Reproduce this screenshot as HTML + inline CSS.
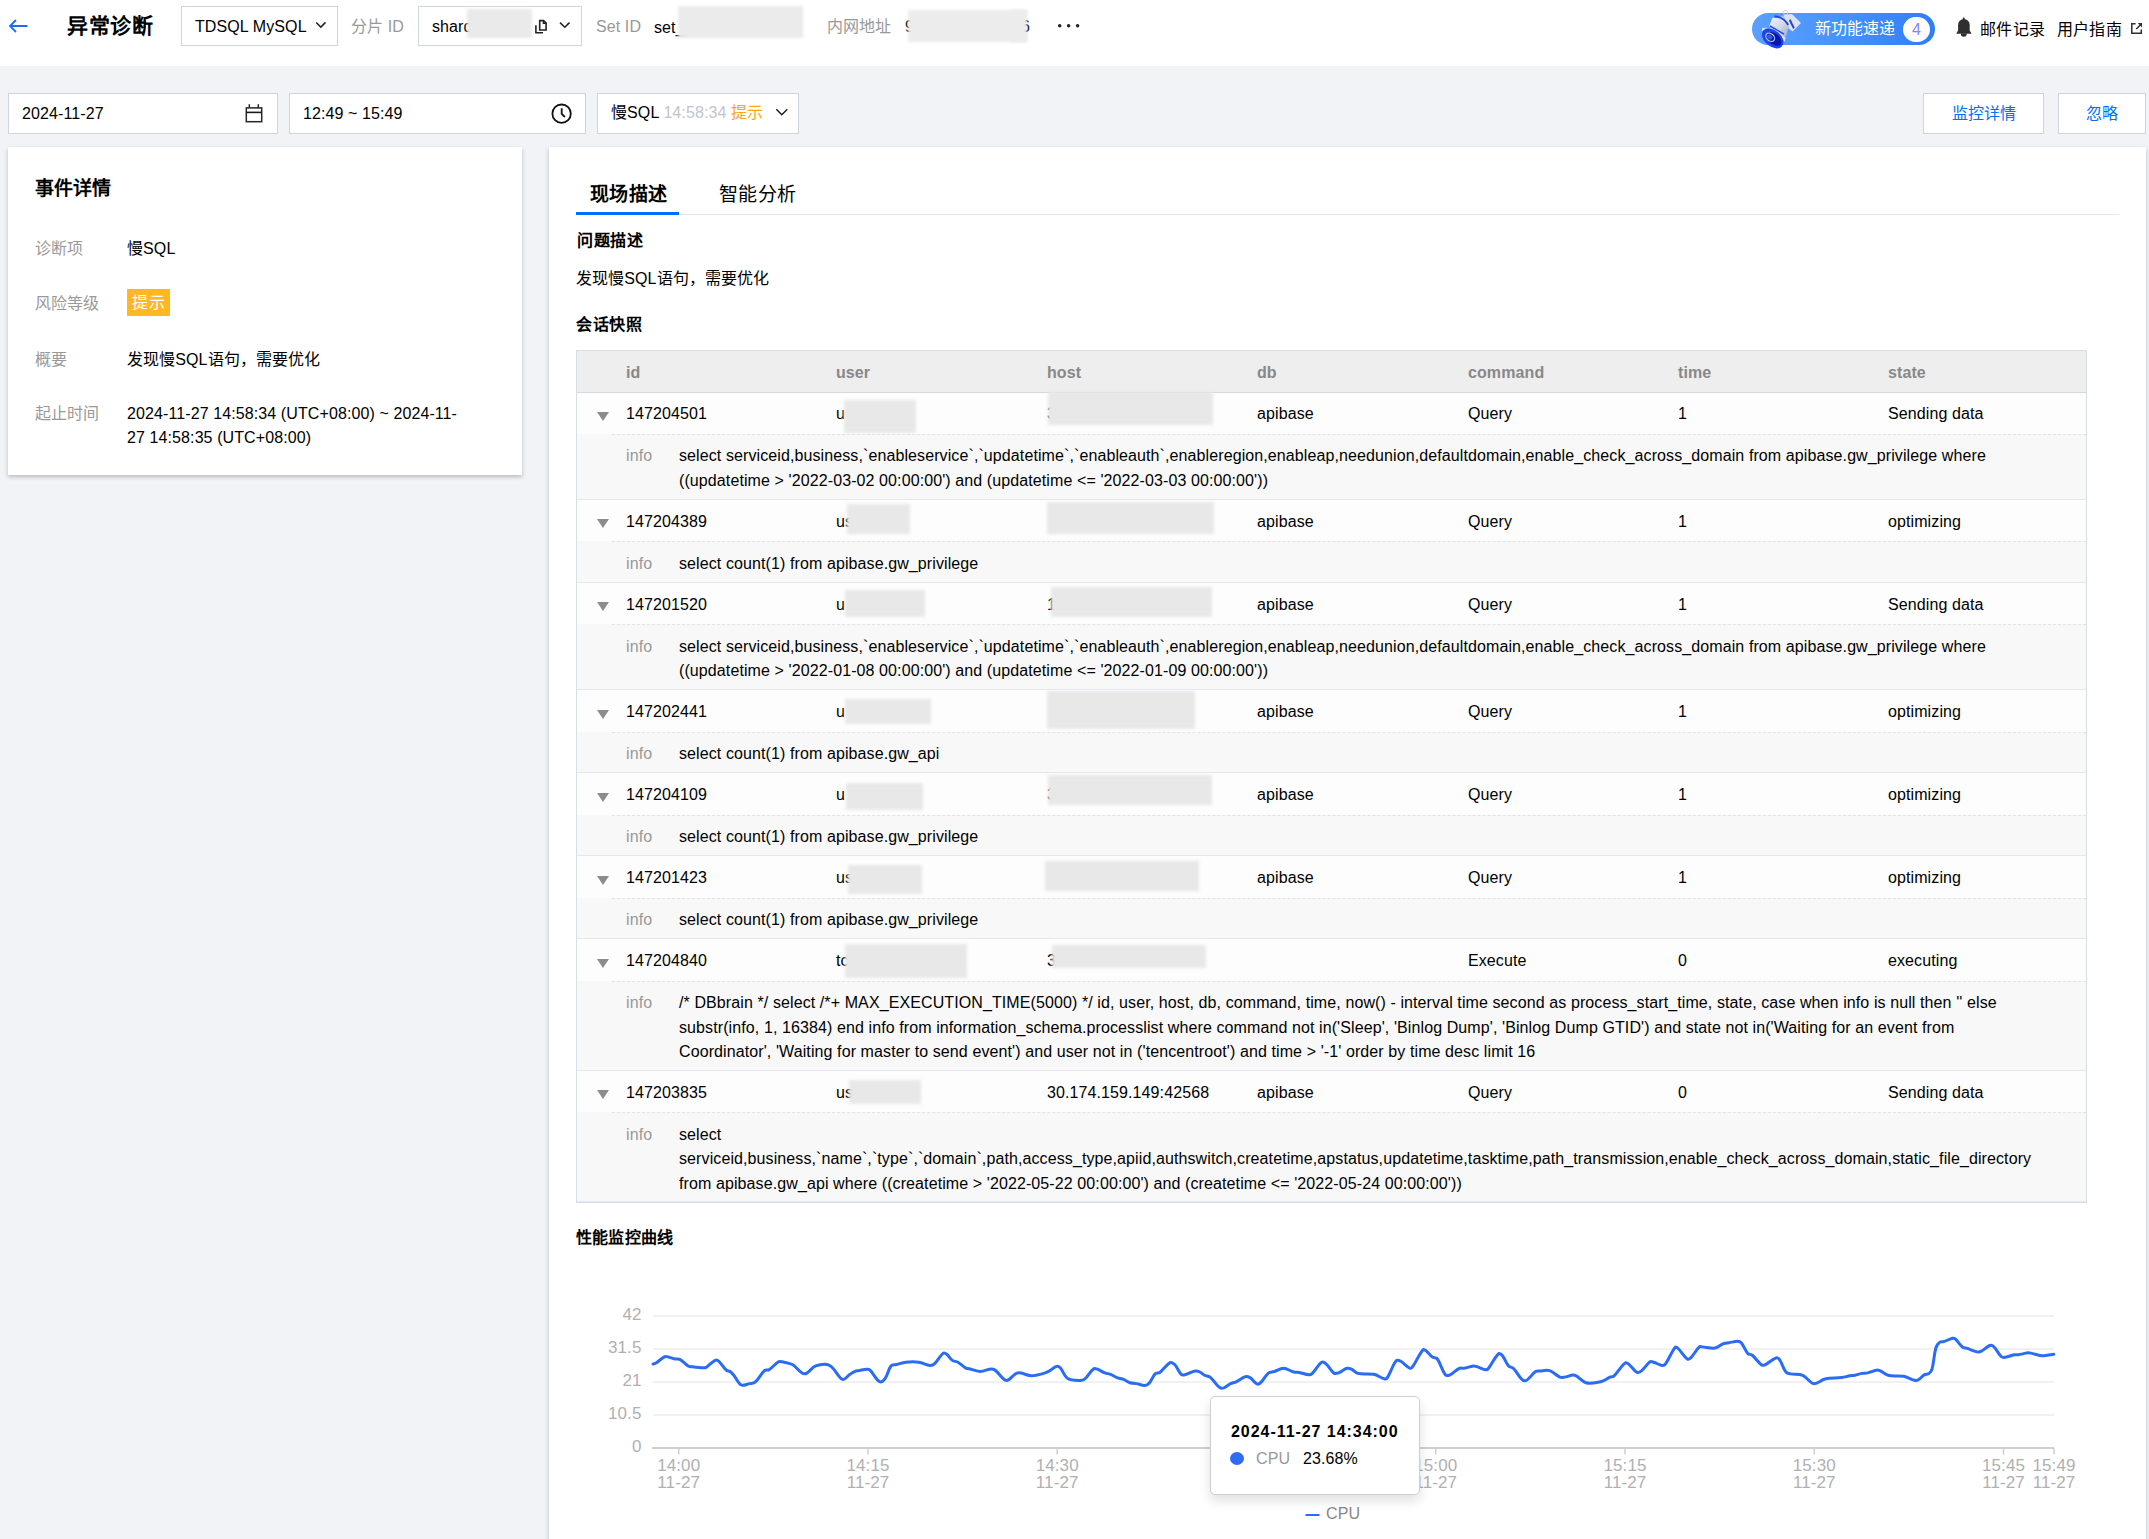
<!DOCTYPE html><html lang="zh-CN"><head><meta charset="utf-8"><style>
*{box-sizing:border-box;margin:0;padding:0}
html,body{width:2149px;height:1539px;overflow:hidden}
body{background:#f2f3f6;font-family:"Liberation Sans",sans-serif;color:#000;font-size:16px;position:relative;letter-spacing:.1px}
.abs{position:absolute}
.hdr{position:absolute;left:0;top:0;width:2149px;height:66px;background:#fff}
.box{position:absolute;border:1px solid #cfd5de;background:#fff}
.blur{position:absolute;background:#e8e8e8;filter:blur(1.5px)}
.gray{color:#999}
.t{position:absolute;white-space:nowrap;line-height:1}
.panel{position:absolute;background:#fff;box-shadow:0 2px 4px rgba(54,58,80,.3)}
.tbl{position:absolute;left:576px;top:350px;width:1511px;height:853px;border:1px solid #d9dee6;background:#fff}
.th{position:absolute;left:577px;top:351px;width:1509px;height:42px;background:#eeeeee;border-bottom:1px solid #d3d9e1}
.th span{position:absolute;top:14px;line-height:1;font-weight:bold;color:#888;font-size:16px}
.tr{position:absolute;left:577px;width:1509px;background:#fdfdfd}
.tr .c{position:absolute;top:14px;line-height:1;white-space:nowrap}
.tri{position:absolute;left:19.5px;top:19.5px;width:0;height:0;border-left:6px solid transparent;border-right:6px solid transparent;border-top:9px solid #8c8c8c}
.ir{position:absolute;left:577px;width:1509px;background:#f8f8f8;border-bottom:1px solid #e4e8ee}
.ir:before{content:"";position:absolute;left:35px;right:0;top:0;border-top:1px dashed #e3e3e3}
.il{position:absolute;left:49px;top:10.5px;line-height:24.5px;color:#999}
.sql{position:absolute;left:102px;top:10.5px;width:1365px;line-height:24.5px}
</style></head><body>
<div class="hdr">
<svg class="abs" style="left:8px;top:18px" width="22" height="16" viewBox="0 0 22 16"><path d="M2 8H19.5M8 2L2 8L8 14" fill="none" stroke="#1b6ef3" stroke-width="1.8"/></svg>
<div class="t" style="left:67px;top:15px;font-size:21px;font-weight:bold;letter-spacing:.6px">异常诊断</div>
<div class="box" style="left:181px;top:6px;width:157px;height:40px"></div>
<div class="t" style="left:195px;top:18.5px">TDSQL MySQL</div>
<svg class="abs" style="left:310px;top:16px" width="20" height="16" viewBox="310 16 20 16"><path d="M316.2 22.4L320.8 27.1L325.5 22.4" fill="none" stroke="#222" stroke-width="1.5"/></svg>
<div class="t gray" style="left:351px;top:19px">分片 ID</div>
<div class="box" style="left:418px;top:6px;width:164px;height:40px"></div>
<div class="t" style="left:432px;top:19px">shard</div>
<div class="blur" style="left:467px;top:9px;width:65px;height:29px;background:#eaeaea"></div>
<svg class="abs" style="left:530px;top:14px" width="45" height="24" viewBox="530 14 45 24"><path d="M539.7 30V20.6H543.6L546.1 23.1V30Z" fill="none" stroke="#222" stroke-width="1.6"/><path d="M543.4 20.2V23.3H546.4" fill="none" stroke="#222" stroke-width="1.4"/><path d="M535.9 25.2V32.8H543" fill="none" stroke="#222" stroke-width="1.6"/><path d="M560 22.6L564.8 27.3L569.5 22.6" fill="none" stroke="#222" stroke-width="1.5"/></svg>
<div class="t gray" style="left:596px;top:19px">Set ID</div>
<div class="t" style="left:654px;top:19.5px">set_</div>
<div class="blur" style="left:678px;top:6px;width:125px;height:32px;background:#ebebeb"></div>
<div class="t gray" style="left:827px;top:18.5px">内网地址</div>
<div class="t" style="left:905px;top:19px">9</div>
<div class="blur" style="left:908px;top:10px;width:119px;height:32px;background:#ececec"></div>
<div class="t" style="left:1021px;top:19px">6</div>
<div class="blur" style="left:1010px;top:10px;width:17px;height:32px;background:#ececec"></div>
<svg class="abs" style="left:1050px;top:20px" width="35" height="12" viewBox="1050 20 35 12"><circle cx="1059.7" cy="25.8" r="1.75" fill="#222"/><circle cx="1068.6" cy="25.8" r="1.75" fill="#222"/><circle cx="1077.6" cy="25.8" r="1.75" fill="#222"/></svg>
<div class="abs" style="left:1752px;top:13px;width:183px;height:32px;border-radius:16px;background:linear-gradient(90deg,#5aa0fe 0%,#4a95fd 40%,#2f7ef7 100%)"></div>
<svg class="abs" style="left:1745px;top:5px" width="70" height="47" viewBox="0 0 2149 1443">
<defs><linearGradient id="mg" x1="0" y1="0" x2="1" y2="1"><stop offset="0" stop-color="#eef1f6"/><stop offset=".55" stop-color="#d3d8e6"/><stop offset="1" stop-color="#98a2c8"/></linearGradient></defs>
<path d="M1175 300L1440 280L1720 555L1460 815L1340 720Z" fill="#dce1ef"/>
<path d="M1345 465L1400 440L1525 700L1480 735Z" fill="#1f42e2"/>
<ellipse cx="1245" cy="232" rx="72" ry="62" fill="none" stroke="#c6cee8" stroke-width="30"/>
<path d="M840 400L1170 345L1345 650L1250 1010L740 660Z" fill="url(#mg)"/>
<path d="M905 355Q1160 345 1330 610" fill="none" stroke="#1d44e6" stroke-width="58"/>
<path d="M765 640L1195 895" fill="none" stroke="#1e45e8" stroke-width="46"/>
<path d="M530 705Q900 640 1245 1010L1225 1125Q900 770 515 790Z" fill="#dde2ee"/>
<ellipse cx="850" cy="1025" rx="375" ry="250" transform="rotate(40 850 1025)" fill="#1c46e8"/>
<ellipse cx="890" cy="1040" rx="265" ry="165" transform="rotate(40 890 1040)" fill="#0716b0"/>
<ellipse cx="775" cy="990" rx="150" ry="110" transform="rotate(40 775 990)" fill="none" stroke="#c3cbe6" stroke-width="36"/>
<ellipse cx="760" cy="980" rx="92" ry="70" transform="rotate(40 760 980)" fill="#2b5df0"/>
</svg>
<div class="t" style="left:1815px;top:20.5px;color:#fff">新功能速递</div>
<div class="abs" style="left:1902.5px;top:16.5px;width:27.5px;height:25.5px;border-radius:13px;background:#fff"></div>
<div class="t" style="left:1912px;top:21.5px;color:#8585f5">4</div>
<svg class="abs" style="left:1950px;top:12px" width="30" height="30" viewBox="0 0 30 30"><path d="M6.2 21.7L8.1 18.6V12.8A5.7 5.7 0 0 1 19.7 12.8V18.6L21.6 21.7Z" fill="#2f2f2f"/><rect x="12.8" y="5.6" width="1.9" height="3" rx=".9" fill="#2f2f2f"/><path d="M10.8 21.5A3 3.2 0 0 0 16.8 21.5Z" fill="#2f2f2f"/></svg>
<div class="t" style="left:1980px;top:22px;letter-spacing:.4px">邮件记录</div>
<div class="t" style="left:2056.5px;top:22px;letter-spacing:.4px">用户指南</div>
<svg class="abs" style="left:2125px;top:18px" width="24" height="22" viewBox="2125 18 24 22"><path d="M2135.6 23.8H2131.8V33.3H2141.3V29.4" fill="none" stroke="#2f2f2f" stroke-width="1.5"/><path d="M2136.3 29L2140.6 24.7" fill="none" stroke="#2f2f2f" stroke-width="1.6"/><path d="M2137.8 23.1H2142V27.4Z" fill="#2f2f2f"/></svg>
</div>
<div class="box" style="left:8px;top:93px;width:270px;height:41px"></div>
<div class="t" style="left:22px;top:105.5px">2024-11-27</div>
<svg class="abs" style="left:240px;top:100px" width="30" height="28" viewBox="240 100 30 28"><rect x="246.3" y="107.9" width="15.4" height="13.8" fill="none" stroke="#262626" stroke-width="1.5"/><path d="M246.3 112.4H261.7" stroke="#1a1a1a" stroke-width="1.6"/><path d="M249.3 104.3V108M258.3 104.3V108" stroke="#262626" stroke-width="1.5"/></svg>
<div class="box" style="left:289px;top:93px;width:297px;height:41px"></div>
<div class="t" style="left:303px;top:105.5px">12:49 ~ 15:49</div>
<svg class="abs" style="left:548px;top:100px" width="28" height="28" viewBox="548 100 28 28"><circle cx="561.6" cy="113.7" r="9.2" fill="none" stroke="#111" stroke-width="1.8"/><path d="M561.7 108.2V113.9L564.9 117" fill="none" stroke="#111" stroke-width="1.8"/></svg>
<div class="box" style="left:597px;top:93px;width:202px;height:41px"></div>
<div class="t" style="left:611px;top:105px">慢SQL <span style="color:#bfc5cf">14:58:34</span> <span style="color:#ffa60f">提示</span></div>
<svg class="abs" style="left:770px;top:104px" width="22" height="16" viewBox="770 104 22 16"><path d="M776.3 109.3L781.8 114.8L787.3 109.3" fill="none" stroke="#222" stroke-width="1.5"/></svg>
<div class="box" style="left:1923px;top:93px;width:121px;height:41px"></div>
<div class="t" style="left:1952px;top:106px;color:#006eff">监控详情</div>
<div class="box" style="left:2058px;top:93px;width:88px;height:41px"></div>
<div class="t" style="left:2086px;top:106px;color:#006eff">忽略</div>
<div class="panel" style="left:8px;top:147px;width:514px;height:328px"></div>
<div class="t" style="left:35px;top:178.5px;font-size:19px;font-weight:bold">事件详情</div>
<div class="t gray" style="left:35px;top:241px">诊断项</div>
<div class="t" style="left:127px;top:240.5px">慢SQL</div>
<div class="t gray" style="left:35px;top:295.5px">风险等级</div>
<div class="abs" style="left:127px;top:289px;width:43px;height:27px;background:#ffb821"></div>
<div class="t" style="left:132px;top:295px;color:#fff;letter-spacing:.6px">提示</div>
<div class="t gray" style="left:35px;top:351.5px">概要</div>
<div class="t" style="left:127px;top:351.5px">发现慢SQL语句，需要优化</div>
<div class="t gray" style="left:35px;top:406px">起止时间</div>
<div class="abs" style="left:127px;top:401.5px;width:340px;line-height:24px">2024-11-27 14:58:34 (UTC+08:00) ~ 2024-11-27 14:58:35 (UTC+08:00)</div>
<div class="panel" style="left:549px;top:147px;width:1597px;height:1400px"></div>
<div class="t" style="left:590px;top:184.5px;font-size:19px;font-weight:bold;letter-spacing:.3px">现场描述</div>
<div class="abs" style="left:576px;top:213.5px;width:1543px;height:1.5px;background:#e3e6ec"></div>
<div class="abs" style="left:576px;top:212px;width:103px;height:3px;background:#006eff"></div>
<div class="t" style="left:719px;top:184.5px;font-size:19px;letter-spacing:.3px">智能分析</div>
<div class="t" style="left:577px;top:232.5px;font-weight:bold;letter-spacing:.5px">问题描述</div>
<div class="t" style="left:576px;top:271px">发现慢SQL语句，需要优化</div>
<div class="t" style="left:576px;top:317px;font-weight:bold;letter-spacing:.5px">会话快照</div>
<div class="tbl"></div>
<div class="th"><span style="left:49px">id</span><span style="left:259px">user</span><span style="left:470px">host</span><span style="left:680px">db</span><span style="left:891px">command</span><span style="left:1101px">time</span><span style="left:1311px">state</span></div>
<div class="tr" style="top:392.0px;height:41.5px"><i class="tri"></i><span class="c" style="left:49px">147204501</span><span class="c" style="left:259px">u</span><span class="c" style="left:470px">3</span><span class="c" style="left:680px">apibase</span><span class="c" style="left:891px">Query</span><span class="c" style="left:1101px">1</span><span class="c" style="left:1311px">Sending data</span></div>
<div class="ir" style="top:433.5px;height:66px"><span class="il">info</span><div class="sql">select serviceid,business,`enableservice`,`updatetime`,`enableauth`,enableregion,enableap,needunion,defaultdomain,enable_check_across_domain from apibase.gw_privilege where ((updatetime &gt; '2022-03-02 00:00:00') and (updatetime &lt;= '2022-03-03 00:00:00'))</div></div>
<div class="tr" style="top:499.5px;height:41.5px"><i class="tri"></i><span class="c" style="left:49px">147204389</span><span class="c" style="left:259px">us</span><span class="c" style="left:470px"></span><span class="c" style="left:680px">apibase</span><span class="c" style="left:891px">Query</span><span class="c" style="left:1101px">1</span><span class="c" style="left:1311px">optimizing</span></div>
<div class="ir" style="top:541.0px;height:41.5px"><span class="il">info</span><div class="sql">select count(1) from apibase.gw_privilege</div></div>
<div class="tr" style="top:582.5px;height:41.5px"><i class="tri"></i><span class="c" style="left:49px">147201520</span><span class="c" style="left:259px">u</span><span class="c" style="left:470px">1</span><span class="c" style="left:680px">apibase</span><span class="c" style="left:891px">Query</span><span class="c" style="left:1101px">1</span><span class="c" style="left:1311px">Sending data</span></div>
<div class="ir" style="top:624.0px;height:66px"><span class="il">info</span><div class="sql">select serviceid,business,`enableservice`,`updatetime`,`enableauth`,enableregion,enableap,needunion,defaultdomain,enable_check_across_domain from apibase.gw_privilege where ((updatetime &gt; '2022-01-08 00:00:00') and (updatetime &lt;= '2022-01-09 00:00:00'))</div></div>
<div class="tr" style="top:690.0px;height:41.5px"><i class="tri"></i><span class="c" style="left:49px">147202441</span><span class="c" style="left:259px">u</span><span class="c" style="left:470px"></span><span class="c" style="left:680px">apibase</span><span class="c" style="left:891px">Query</span><span class="c" style="left:1101px">1</span><span class="c" style="left:1311px">optimizing</span></div>
<div class="ir" style="top:731.5px;height:41.5px"><span class="il">info</span><div class="sql">select count(1) from apibase.gw_api</div></div>
<div class="tr" style="top:773.0px;height:41.5px"><i class="tri"></i><span class="c" style="left:49px">147204109</span><span class="c" style="left:259px">u</span><span class="c" style="left:470px">3</span><span class="c" style="left:680px">apibase</span><span class="c" style="left:891px">Query</span><span class="c" style="left:1101px">1</span><span class="c" style="left:1311px">optimizing</span></div>
<div class="ir" style="top:814.5px;height:41.5px"><span class="il">info</span><div class="sql">select count(1) from apibase.gw_privilege</div></div>
<div class="tr" style="top:856.0px;height:41.5px"><i class="tri"></i><span class="c" style="left:49px">147201423</span><span class="c" style="left:259px">us</span><span class="c" style="left:470px"></span><span class="c" style="left:680px">apibase</span><span class="c" style="left:891px">Query</span><span class="c" style="left:1101px">1</span><span class="c" style="left:1311px">optimizing</span></div>
<div class="ir" style="top:897.5px;height:41.5px"><span class="il">info</span><div class="sql">select count(1) from apibase.gw_privilege</div></div>
<div class="tr" style="top:939.0px;height:41.5px"><i class="tri"></i><span class="c" style="left:49px">147204840</span><span class="c" style="left:259px">tc</span><span class="c" style="left:470px">3</span><span class="c" style="left:680px"></span><span class="c" style="left:891px">Execute</span><span class="c" style="left:1101px">0</span><span class="c" style="left:1311px">executing</span></div>
<div class="ir" style="top:980.5px;height:90px"><span class="il">info</span><div class="sql">/* DBbrain */ select /*+ MAX_EXECUTION_TIME(5000) */ id, user, host, db, command, time, now() - interval time second as process_start_time, state, case when info is null then '' else substr(info, 1, 16384) end info from information_schema.processlist where command not in('Sleep', 'Binlog Dump', 'Binlog Dump GTID') and state not in('Waiting for an event from Coordinator', 'Waiting for master to send event') and user not in ('tencentroot') and time &gt; '-1' order by time desc limit 16</div></div>
<div class="tr" style="top:1070.5px;height:41.5px"><i class="tri"></i><span class="c" style="left:49px">147203835</span><span class="c" style="left:259px">us</span><span class="c" style="left:470px">30.174.159.149:42568</span><span class="c" style="left:680px">apibase</span><span class="c" style="left:891px">Query</span><span class="c" style="left:1101px">0</span><span class="c" style="left:1311px">Sending data</span></div>
<div class="ir" style="top:1112.0px;height:90px"><span class="il">info</span><div class="sql">select serviceid,business,`name`,`type`,`domain`,path,access_type,apiid,authswitch,createtime,apstatus,updatetime,tasktime,path_transmission,enable_check_across_domain,static_file_directory from apibase.gw_api where ((createtime &gt; '2022-05-22 00:00:00') and (createtime &lt;= '2022-05-24 00:00:00'))</div></div>
<div class="abs" style="left:577px;top:392px;width:1509px;height:1px;background:#d3d9e1"></div>
<div class="blur" style="left:844px;top:400px;width:72px;height:33px"></div>
<div class="blur" style="left:1048px;top:392px;width:165px;height:33px"></div>
<div class="blur" style="left:847px;top:504px;width:63px;height:30px"></div>
<div class="blur" style="left:1047px;top:502px;width:167px;height:32px"></div>
<div class="blur" style="left:845px;top:590px;width:80px;height:27px"></div>
<div class="blur" style="left:1051px;top:587px;width:161px;height:30px"></div>
<div class="blur" style="left:845px;top:699px;width:86px;height:25px"></div>
<div class="blur" style="left:1047px;top:691px;width:148px;height:38px"></div>
<div class="blur" style="left:846px;top:783px;width:77px;height:27px"></div>
<div class="blur" style="left:1048px;top:775px;width:164px;height:30px"></div>
<div class="blur" style="left:848px;top:865px;width:74px;height:29px"></div>
<div class="blur" style="left:1045px;top:861px;width:154px;height:30px"></div>
<div class="blur" style="left:845px;top:944px;width:122px;height:34px"></div>
<div class="blur" style="left:1052px;top:945px;width:154px;height:23px"></div>
<div class="blur" style="left:849px;top:1080px;width:72px;height:24px"></div>
<div class="t" style="left:576px;top:1230px;font-weight:bold;letter-spacing:.2px">性能监控曲线</div>
<svg class="abs" style="left:549px;top:1260px" width="1597" height="279" viewBox="549 1260 1597 279">
<line x1="653" y1="1316" x2="2054" y2="1316" stroke="#ececec" stroke-width="1.5"/>
<line x1="653" y1="1349" x2="2054" y2="1349" stroke="#ececec" stroke-width="1.5"/>
<line x1="653" y1="1382" x2="2054" y2="1382" stroke="#ececec" stroke-width="1.5"/>
<line x1="653" y1="1415" x2="2054" y2="1415" stroke="#ececec" stroke-width="1.5"/>
<line x1="652" y1="1448" x2="2054" y2="1448" stroke="#cfcfcf" stroke-width="2"/>
<line x1="678.7" y1="1448" x2="678.7" y2="1454.5" stroke="#cfcfcf" stroke-width="1.5"/>
<line x1="868.0" y1="1448" x2="868.0" y2="1454.5" stroke="#cfcfcf" stroke-width="1.5"/>
<line x1="1057.2" y1="1448" x2="1057.2" y2="1454.5" stroke="#cfcfcf" stroke-width="1.5"/>
<line x1="1246.5" y1="1448" x2="1246.5" y2="1454.5" stroke="#cfcfcf" stroke-width="1.5"/>
<line x1="1435.8" y1="1448" x2="1435.8" y2="1454.5" stroke="#cfcfcf" stroke-width="1.5"/>
<line x1="1625.0" y1="1448" x2="1625.0" y2="1454.5" stroke="#cfcfcf" stroke-width="1.5"/>
<line x1="1814.3" y1="1448" x2="1814.3" y2="1454.5" stroke="#cfcfcf" stroke-width="1.5"/>
<line x1="2003.5" y1="1448" x2="2003.5" y2="1454.5" stroke="#cfcfcf" stroke-width="1.5"/>
<line x1="2054.0" y1="1448" x2="2054.0" y2="1454.5" stroke="#cfcfcf" stroke-width="1.5"/>
<text x="641.5" y="1320" text-anchor="end" font-size="17" fill="#b0b0b0">42</text>
<text x="641.5" y="1353" text-anchor="end" font-size="17" fill="#b0b0b0">31.5</text>
<text x="641.5" y="1386" text-anchor="end" font-size="17" fill="#b0b0b0">21</text>
<text x="641.5" y="1419" text-anchor="end" font-size="17" fill="#b0b0b0">10.5</text>
<text x="641.5" y="1452" text-anchor="end" font-size="17" fill="#b0b0b0">0</text>
<text x="678.7" y="1471" text-anchor="middle" font-size="17" fill="#b0b0b0">14:00</text>
<text x="678.7" y="1488" text-anchor="middle" font-size="17" fill="#b0b0b0">11-27</text>
<text x="868.0" y="1471" text-anchor="middle" font-size="17" fill="#b0b0b0">14:15</text>
<text x="868.0" y="1488" text-anchor="middle" font-size="17" fill="#b0b0b0">11-27</text>
<text x="1057.2" y="1471" text-anchor="middle" font-size="17" fill="#b0b0b0">14:30</text>
<text x="1057.2" y="1488" text-anchor="middle" font-size="17" fill="#b0b0b0">11-27</text>
<text x="1435.8" y="1471" text-anchor="middle" font-size="17" fill="#b0b0b0">15:00</text>
<text x="1435.8" y="1488" text-anchor="middle" font-size="17" fill="#b0b0b0">11-27</text>
<text x="1625.0" y="1471" text-anchor="middle" font-size="17" fill="#b0b0b0">15:15</text>
<text x="1625.0" y="1488" text-anchor="middle" font-size="17" fill="#b0b0b0">11-27</text>
<text x="1814.3" y="1471" text-anchor="middle" font-size="17" fill="#b0b0b0">15:30</text>
<text x="1814.3" y="1488" text-anchor="middle" font-size="17" fill="#b0b0b0">11-27</text>
<text x="2003.5" y="1471" text-anchor="middle" font-size="17" fill="#b0b0b0">15:45</text>
<text x="2003.5" y="1488" text-anchor="middle" font-size="17" fill="#b0b0b0">11-27</text>
<text x="2054.0" y="1471" text-anchor="middle" font-size="17" fill="#b0b0b0">15:49</text>
<text x="2054.0" y="1488" text-anchor="middle" font-size="17" fill="#b0b0b0">11-27</text>
<path d="M653.00 1364.09C653.00 1364.09 655.41 1363.40 656.51 1362.69C659.24 1360.95 661.21 1358.73 663.96 1357.11C664.80 1356.61 665.79 1356.48 666.75 1356.64C669.70 1357.13 672.16 1358.33 675.13 1358.97C676.72 1359.31 678.39 1358.69 679.78 1359.43C682.95 1361.13 685.09 1363.95 688.16 1365.95C688.99 1366.49 689.95 1366.58 690.95 1366.69C695.48 1367.23 699.46 1367.76 703.98 1367.81C705.00 1367.82 705.92 1367.45 706.77 1366.88C709.83 1364.84 712.04 1361.80 715.15 1360.37C716.27 1359.85 717.90 1360.44 718.87 1361.30C721.80 1363.86 723.41 1367.47 726.31 1370.14C727.31 1371.05 728.92 1370.76 730.04 1371.53C731.52 1372.55 732.59 1373.84 733.76 1375.26C736.50 1378.56 737.93 1383.29 741.21 1385.03C743.47 1386.23 746.67 1384.21 749.58 1383.63C751.56 1383.24 753.71 1383.51 755.17 1382.24C758.92 1378.95 760.77 1373.94 764.47 1370.60C765.65 1369.54 767.76 1370.54 769.13 1369.67C772.64 1367.44 774.94 1363.88 778.43 1361.76C779.50 1361.11 780.89 1361.51 782.15 1361.76C785.77 1362.48 789.19 1362.82 792.39 1364.55C797.00 1367.05 800.20 1373.60 804.49 1373.86C808.34 1374.09 811.31 1367.40 815.66 1365.95C820.10 1364.47 825.63 1363.49 829.62 1365.48C835.07 1368.21 837.79 1377.34 842.65 1379.44C844.93 1380.43 847.38 1376.05 850.00 1374.33C851.59 1373.28 852.92 1372.23 854.65 1371.53C856.17 1370.93 857.68 1370.92 859.31 1370.60C861.91 1370.10 864.16 1369.32 866.75 1369.21C867.91 1369.16 869.18 1369.34 870.01 1370.14C873.74 1373.73 876.05 1379.85 879.78 1381.77C881.43 1382.62 884.06 1379.90 885.37 1378.05C887.96 1374.37 888.22 1369.25 890.95 1365.95C892.13 1364.52 894.58 1365.04 896.53 1364.55C899.79 1363.74 902.52 1362.57 905.84 1362.23C910.34 1361.76 914.40 1361.62 918.87 1362.23C922.86 1362.76 926.17 1365.14 930.04 1365.48C931.70 1365.63 933.44 1364.79 934.69 1363.62C938.00 1360.55 939.78 1355.91 943.07 1353.39C944.02 1352.65 945.75 1353.54 946.79 1354.32C949.01 1355.98 950.09 1358.75 952.37 1360.37C954.00 1361.52 956.19 1361.22 957.96 1362.23C960.75 1363.82 962.58 1366.30 965.40 1367.81C967.15 1368.74 969.03 1368.72 970.99 1369.21C974.24 1370.02 977.01 1371.53 980.29 1371.53C984.83 1371.53 989.35 1367.86 993.32 1369.21C998.47 1370.95 1001.60 1379.64 1006.35 1380.37C1010.07 1380.95 1013.25 1373.72 1017.52 1372.93C1022.05 1372.09 1026.59 1375.63 1031.48 1375.72C1035.71 1375.80 1039.45 1374.54 1043.58 1373.39C1045.93 1372.75 1047.85 1371.76 1050.00 1370.60C1052.38 1369.32 1054.15 1367.06 1056.51 1366.41C1057.73 1366.08 1059.32 1366.82 1060.24 1367.81C1063.23 1371.06 1064.08 1376.40 1067.68 1378.51C1071.57 1380.80 1076.87 1380.37 1081.64 1380.37C1083.05 1380.37 1084.33 1379.51 1085.37 1378.51C1088.57 1375.44 1090.46 1371.26 1093.74 1368.74C1094.70 1368.01 1096.25 1368.75 1097.46 1369.21C1100.16 1370.22 1102.21 1371.87 1104.91 1372.93C1106.77 1373.66 1108.62 1373.61 1110.49 1374.33C1112.86 1375.24 1114.65 1376.65 1117.01 1377.58C1119.21 1378.45 1121.32 1378.58 1123.52 1379.44C1125.89 1380.37 1127.64 1381.93 1130.04 1382.70C1132.20 1383.40 1134.29 1383.21 1136.55 1383.63C1139.50 1384.18 1142.13 1385.69 1144.93 1385.49C1146.69 1385.37 1148.36 1384.09 1149.58 1382.70C1151.94 1380.02 1152.72 1376.31 1155.17 1373.86C1156.30 1372.72 1158.49 1373.46 1159.82 1372.46C1163.70 1369.55 1166.21 1364.74 1170.06 1362.69C1171.42 1361.97 1173.54 1363.34 1174.71 1364.55C1177.45 1367.41 1178.51 1371.61 1181.22 1374.33C1182.09 1375.19 1183.69 1375.08 1184.95 1374.79C1188.58 1373.94 1191.55 1371.75 1195.18 1371.07C1196.77 1370.77 1198.35 1371.33 1199.84 1372.00C1201.61 1372.80 1202.73 1374.38 1204.49 1375.26C1206.31 1376.17 1208.48 1375.88 1210.07 1377.12C1214.35 1380.44 1216.92 1386.91 1221.24 1388.29C1224.09 1389.19 1227.22 1385.09 1230.55 1383.63C1232.43 1382.81 1234.27 1382.64 1236.13 1381.77C1239.49 1380.20 1242.07 1377.67 1245.44 1376.65C1246.92 1376.21 1248.62 1376.79 1250.00 1377.58C1253.15 1379.39 1255.69 1384.77 1258.38 1384.10C1262.21 1383.14 1264.60 1376.12 1268.61 1372.93C1270.14 1371.72 1272.28 1372.13 1274.20 1371.53C1277.49 1370.50 1280.25 1368.20 1283.50 1368.28C1287.09 1368.36 1290.08 1371.03 1293.74 1372.00C1295.62 1372.50 1297.40 1372.10 1299.33 1372.46C1302.62 1373.08 1305.41 1374.56 1308.63 1374.79C1309.97 1374.89 1311.38 1374.34 1312.35 1373.39C1315.94 1369.94 1318.03 1364.65 1321.66 1362.23C1322.91 1361.39 1325.03 1362.95 1326.31 1364.09C1329.27 1366.70 1330.74 1370.72 1333.76 1372.93C1334.98 1373.82 1336.92 1373.46 1338.41 1372.93C1341.48 1371.83 1343.74 1369.15 1346.79 1368.28C1348.30 1367.84 1349.96 1368.53 1351.44 1369.21C1353.87 1370.32 1355.39 1372.81 1357.96 1373.39C1363.21 1374.60 1368.42 1373.22 1373.78 1374.33C1377.87 1375.17 1381.12 1378.21 1384.95 1378.98C1386.01 1379.19 1387.13 1378.10 1387.74 1377.12C1391.04 1371.75 1392.48 1365.24 1396.11 1360.83C1397.04 1359.70 1399.37 1360.55 1400.77 1361.30C1404.25 1363.15 1406.79 1366.89 1410.07 1368.28C1411.02 1368.68 1412.20 1367.37 1412.87 1366.41C1416.76 1360.85 1419.07 1353.96 1423.10 1349.66C1423.96 1348.75 1425.70 1350.62 1426.83 1351.52C1428.96 1353.23 1430.19 1355.60 1432.41 1357.11C1433.78 1358.04 1436.11 1357.21 1437.06 1358.50C1440.67 1363.40 1441.81 1370.23 1445.44 1374.79C1446.34 1375.93 1448.61 1375.44 1450.00 1374.79C1453.46 1373.16 1455.84 1369.89 1459.31 1368.28C1460.73 1367.61 1462.36 1368.54 1463.96 1368.28C1467.25 1367.73 1470.00 1366.45 1473.27 1365.95C1474.23 1365.80 1475.11 1366.12 1476.06 1366.41C1479.35 1367.43 1482.10 1369.04 1485.37 1369.67C1486.34 1369.86 1487.52 1369.52 1488.16 1368.74C1492.08 1363.98 1494.39 1357.72 1498.39 1353.85C1499.28 1353.00 1501.25 1354.23 1502.12 1355.25C1504.84 1358.46 1505.87 1362.73 1508.63 1365.95C1509.78 1367.29 1511.98 1367.04 1513.29 1368.28C1517.51 1372.26 1520.26 1380.23 1524.45 1380.84C1528.08 1381.37 1531.48 1374.25 1535.62 1371.53C1536.69 1370.83 1538.03 1371.16 1539.34 1371.07C1542.92 1370.83 1546.30 1369.63 1549.58 1370.60C1553.47 1371.75 1556.05 1375.47 1559.82 1377.12C1561.26 1377.75 1562.86 1377.32 1564.47 1377.12C1568.07 1376.67 1571.44 1374.40 1574.71 1375.26C1578.93 1376.36 1581.56 1381.62 1585.88 1382.70C1590.68 1383.90 1595.78 1382.92 1600.77 1381.77C1604.25 1380.97 1606.74 1378.55 1610.07 1377.12C1611.30 1376.59 1612.84 1377.08 1613.80 1376.19C1618.06 1372.19 1620.71 1366.62 1624.97 1363.16C1625.92 1362.38 1627.65 1363.29 1628.69 1364.09C1631.89 1366.55 1633.86 1370.86 1637.06 1372.46C1638.42 1373.14 1640.39 1371.70 1641.72 1370.60C1644.92 1367.95 1646.79 1364.00 1650.00 1361.76C1650.99 1361.07 1652.48 1361.84 1653.72 1362.23C1656.71 1363.15 1659.18 1365.02 1662.10 1365.48C1663.25 1365.67 1664.65 1365.07 1665.36 1364.09C1669.21 1358.72 1671.31 1352.14 1675.13 1347.34C1675.71 1346.61 1677.19 1347.57 1677.92 1348.27C1681.43 1351.64 1683.66 1356.43 1687.23 1358.97C1688.23 1359.68 1689.99 1358.53 1690.95 1357.57C1694.23 1354.30 1696.08 1349.98 1699.33 1346.87C1699.99 1346.23 1701.15 1346.77 1702.12 1346.87C1706.03 1347.26 1709.40 1348.15 1713.29 1348.27C1714.61 1348.31 1715.80 1347.89 1717.01 1347.34C1719.38 1346.26 1721.11 1344.54 1723.52 1343.61C1725.34 1342.91 1727.15 1343.01 1729.11 1342.68C1732.04 1342.19 1734.60 1341.29 1737.48 1341.29C1738.83 1341.29 1740.34 1341.66 1741.21 1342.68C1743.93 1345.90 1744.93 1350.24 1747.72 1353.39C1748.84 1354.64 1751.05 1354.14 1752.37 1355.25C1755.94 1358.22 1758.11 1362.47 1761.68 1365.02C1762.67 1365.73 1764.25 1365.13 1765.40 1364.55C1769.13 1362.69 1771.96 1359.39 1775.64 1358.04C1776.85 1357.60 1778.58 1358.36 1779.36 1359.43C1782.16 1363.25 1782.99 1368.27 1785.88 1372.00C1786.90 1373.32 1788.82 1373.53 1790.53 1373.86C1794.68 1374.67 1798.83 1373.66 1802.63 1375.26C1806.98 1377.08 1809.61 1382.93 1813.80 1383.63C1817.43 1384.24 1820.88 1379.86 1824.97 1378.98C1830.65 1377.75 1835.89 1378.32 1841.72 1377.58C1844.65 1377.21 1847.08 1376.32 1850.00 1375.82C1851.69 1375.53 1853.21 1375.68 1854.89 1375.33C1857.31 1374.82 1859.29 1373.84 1861.73 1373.37C1863.74 1372.99 1865.59 1373.32 1867.59 1372.88C1870.72 1372.20 1873.28 1370.63 1876.39 1370.15C1877.73 1369.94 1879.03 1370.38 1880.29 1370.93C1882.79 1372.02 1884.65 1373.71 1887.13 1374.84C1888.41 1375.42 1889.64 1375.69 1891.04 1375.82C1895.46 1376.21 1899.43 1375.49 1903.75 1376.30C1907.64 1377.03 1910.68 1379.32 1914.50 1380.21C1915.81 1380.52 1917.24 1380.37 1918.41 1379.72C1920.66 1378.48 1922.01 1376.17 1924.27 1374.84C1925.78 1373.95 1927.81 1374.38 1929.16 1373.37C1930.55 1372.33 1931.62 1370.74 1932.09 1368.98C1934.02 1361.68 1933.90 1354.69 1936.00 1347.48C1936.63 1345.28 1938.19 1343.39 1939.91 1342.10C1940.92 1341.34 1942.50 1342.02 1943.81 1341.61C1946.95 1340.65 1949.52 1338.84 1952.61 1338.19C1953.62 1337.98 1954.76 1338.46 1955.54 1339.17C1958.18 1341.54 1959.63 1344.81 1962.38 1346.99C1963.73 1348.06 1965.57 1347.89 1967.27 1348.45C1970.70 1349.60 1973.57 1351.13 1977.04 1351.87C1978.36 1352.16 1979.74 1351.99 1980.95 1351.39C1984.19 1349.77 1986.52 1346.76 1989.74 1345.52C1990.97 1345.05 1992.68 1345.56 1993.65 1346.50C1996.78 1349.50 1998.33 1353.88 2001.47 1356.76C2002.43 1357.64 2004.04 1357.45 2005.38 1357.25C2008.49 1356.77 2011.06 1355.40 2014.17 1354.81C2015.51 1354.55 2016.73 1355.00 2018.08 1354.81C2021.52 1354.31 2024.42 1353.30 2027.86 1352.85C2028.87 1352.72 2029.78 1352.93 2030.79 1353.14C2034.57 1353.95 2037.75 1355.18 2041.54 1355.78C2042.88 1356.00 2044.08 1355.65 2045.45 1355.49C2048.36 1355.14 2053.75 1354.32 2053.75 1354.32" fill="none" stroke="#2a6cf4" stroke-width="3" stroke-linejoin="round" stroke-linecap="round"/>
<line x1="1305.5" y1="1515" x2="1319.5" y2="1515" stroke="#2a6cf4" stroke-width="2"/>
<text x="1326" y="1519" font-size="16" fill="#888">CPU</text>
</svg>
<div class="abs" style="left:1210px;top:1396px;width:210px;height:99px;background:#fff;border:1px solid #cfcfcf;border-radius:5px;box-shadow:0 6px 12px rgba(0,0,0,.12)"></div>
<div class="t" style="left:1231px;top:1424px;font-weight:bold;letter-spacing:.95px">2024-11-27 14:34:00</div>
<div class="abs" style="left:1230px;top:1452px;width:14px;height:13px;border-radius:50%;background:#2f6cf2"></div>
<div class="t" style="left:1256px;top:1451px;color:#999">CPU</div>
<div class="t" style="left:1303px;top:1451px">23.68%</div>
</body></html>
